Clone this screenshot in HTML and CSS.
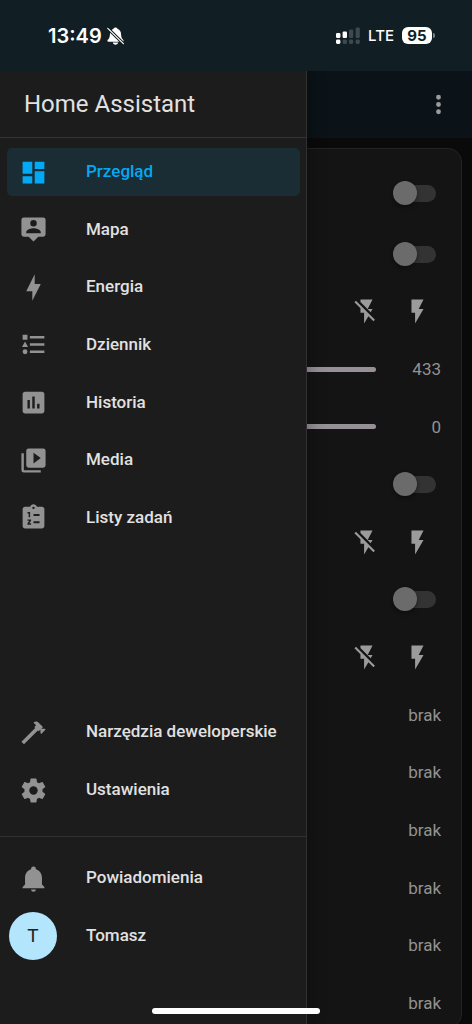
FILE: index.html
```
<!DOCTYPE html>
<html lang="pl">
<head>
<meta charset="utf-8">
<meta name="viewport" content="width=device-width, initial-scale=1">
<title>Home Assistant</title>
<link rel="stylesheet" href="styles.css">
</head>
<body>
<svg class="sprite" aria-hidden="true">
  <symbol id="flash" viewBox="0 0 24 24"><path d="M7,2V13H10V22L17,10H13L17,2H7Z"/></symbol>
  <symbol id="flash-off" viewBox="0 0 24 24"><path d="M17,10H13L17,2H7V4.18L15.46,12.64M3.27,3L2,4.27L7,9.27V13H10V22L13.58,15.86L17.73,20L19,18.73L3.27,3Z"/></symbol>
</svg>

<header class="status">
  <div class="status-left">
    <time class="clock">13:49</time>
    <svg class="mute" viewBox="0 0 17 18" aria-hidden="true">
      <path fill="#fff" d="M8.5 0.4C7.5 0.4 6.8 1 6.5 1.8C4 2.8 3 4.8 2.9 7.5C2.8 10.5 2 11.6 0.8 12.8C0 13.8 0.4 14.8 1.6 14.8H15.4C16.6 14.8 17 13.8 16.2 12.8C15 11.6 14.2 10.5 14.1 7.5C14 4.8 13 2.8 10.5 1.8C10.2 1 9.5 0.4 8.5 0.4ZM5.8 15.6H11.2C10.9 17 9.9 17.7 8.5 17.7S6.1 17 5.8 15.6Z"/>
      <path stroke="#111e23" stroke-width="3.2" d="M0.8 1.4L16.4 16.6"/>
      <path stroke="#fff" stroke-width="1.2" stroke-linecap="round" d="M0.8 1.4L16.4 16.6"/>
    </svg>
  </div>
  <div class="status-right">
    <svg class="signal" viewBox="0 0 24 18" aria-hidden="true">
      <g fill="#fff"><rect x="0" y="6" width="4.4" height="5" rx="1.2"/><rect x="6.6" y="4.5" width="4.4" height="6.5" rx="1.2"/><rect x="0" y="12.5" width="4.4" height="4.5" rx="1.4"/></g>
      <g fill="#3d494e"><rect x="13" y="2.5" width="4.2" height="8.5" rx="1.2"/><rect x="19.6" y="0.5" width="4.2" height="10.5" rx="1.2"/><rect x="6.6" y="12.5" width="4.4" height="4.5" rx="1.4"/><rect x="13" y="12.5" width="4.2" height="4.5" rx="1.4"/><rect x="19.6" y="12.5" width="4.2" height="4.5" rx="1.4"/></g>
    </svg>
    <span class="network">LTE</span>
    <span class="battery">95</span>
  </div>
</header>

<div class="app">
  <main class="view">
    <div class="toolbar">
      <button class="menu" type="button" aria-label="Menu">
        <svg class="icon" viewBox="0 0 24 24"><path d="M12,16A2,2 0 0,1 14,18A2,2 0 0,1 12,20A2,2 0 0,1 10,18A2,2 0 0,1 12,16M12,10A2,2 0 0,1 14,12A2,2 0 0,1 12,14A2,2 0 0,1 10,12A2,2 0 0,1 12,10M12,4A2,2 0 0,1 14,6A2,2 0 0,1 12,8A2,2 0 0,1 10,6A2,2 0 0,1 12,4Z"/></svg>
      </button>
    </div>
    <section class="card">
      <div class="row"><input class="toggle" type="checkbox" aria-label="Wszystkie"></div>
      <div class="rows">
        <div class="row"><input class="toggle" type="checkbox" aria-label="Przełącznik 1"></div>
        <div class="row"><button class="action" type="button" aria-label="Wyłącz"><svg class="icon"><use href="#flash-off"/></svg></button><button class="action" type="button" aria-label="Włącz"><svg class="icon"><use href="#flash"/></svg></button></div>
        <div class="row"><input class="slider" id="s1" type="range" min="0" max="9999" value="433" aria-label="Wartość 1"><output class="value" for="s1">433</output></div>
        <div class="row"><input class="slider" id="s2" type="range" min="0" max="9999" value="0" aria-label="Wartość 2"><output class="value" for="s2">0</output></div>
        <div class="row"><input class="toggle" type="checkbox" aria-label="Przełącznik 2"></div>
        <div class="row"><button class="action" type="button" aria-label="Wyłącz"><svg class="icon"><use href="#flash-off"/></svg></button><button class="action" type="button" aria-label="Włącz"><svg class="icon"><use href="#flash"/></svg></button></div>
        <div class="row"><input class="toggle" type="checkbox" aria-label="Przełącznik 3"></div>
        <div class="row"><button class="action" type="button" aria-label="Wyłącz"><svg class="icon"><use href="#flash-off"/></svg></button><button class="action" type="button" aria-label="Włącz"><svg class="icon"><use href="#flash"/></svg></button></div>
        <div class="row"><span class="value">brak</span></div>
        <div class="row"><span class="value">brak</span></div>
        <div class="row"><span class="value">brak</span></div>
        <div class="row"><span class="value">brak</span></div>
        <div class="row"><span class="value">brak</span></div>
        <div class="row"><span class="value">brak</span></div>
      </div>
    </section>
  </main>

  <aside class="drawer">
    <h1 class="title">Home Assistant</h1>
    <nav class="nav">
      <a class="item active" href="#przeglad"><svg class="icon" viewBox="0 0 24 24"><path d="M13,3V9H21V3M13,21H21V11H13M3,21H11V15H3M3,13H11V3H3V13Z"/></svg><span class="label">Przegląd</span></a>
      <a class="item" href="#mapa"><svg class="icon" viewBox="0 0 24 24"><path fill-rule="evenodd" d="M4,2H20A2,2 0 0,1 22,4V16A2,2 0 0,1 20,18H16L12,22L8,18H4A2,2 0 0,1 2,16V4A2,2 0 0,1 4,2ZM12,4.2A2.7,2.7 0 0,0 12,9.6A2.7,2.7 0 0,0 12,4.2ZM18,15V14.1C18,12.1 14,11 12,11S6,12.1 6,14.1V15H18Z"/></svg><span class="label">Mapa</span></a>
      <a class="item" href="#energia"><svg class="icon" viewBox="0 0 24 24"><path d="M11 15H6L13 1V9H18L11 23V15Z"/></svg><span class="label">Energia</span></a>
      <a class="item" href="#dziennik"><svg class="icon" viewBox="0 0 24 24"><path d="M5,9.5L7.5,14H2.5L5,9.5M3,4H7V8H3V4M5,20A2,2 0 0,0 7,18A2,2 0 0,0 5,16A2,2 0 0,0 3,18A2,2 0 0,0 5,20M9,5V7H21V5H9M9,19H21V17H9V19M9,11V13H21V11H9Z"/></svg><span class="label">Dziennik</span></a>
      <a class="item" href="#historia"><svg class="icon" viewBox="0 0 24 24"><path fill-rule="evenodd" d="M19 3H5C3.9 3 3 3.9 3 5V19C3 20.1 3.9 21 5 21H19C20.1 21 21 20.1 21 19V5C21 3.9 20.1 3 19 3M9 17H7V10H9V17M13 17H11V7H13V17M17 17H15V13H17V17Z"/></svg><span class="label">Historia</span></a>
      <a class="item" href="#media"><svg class="icon" viewBox="0 0 24 24"><path fill-rule="evenodd" d="M4,6H2V20A2,2 0 0,0 4,22H18V20H4V6M20,2H8A2,2 0 0,0 6,4V16A2,2 0 0,0 8,18H20A2,2 0 0,0 22,16V4A2,2 0 0,0 20,2M12,14.5V5.5L18,10L12,14.5Z"/></svg><span class="label">Media</span></a>
      <a class="item" href="#listy"><svg class="icon" viewBox="0 0 24 24"><path fill-rule="evenodd" d="M19 3H14.8C14.4 1.8 13.3 1 12 1S9.6 1.8 9.2 3H5C3.9 3 3 3.9 3 5V19C3 20.1 3.9 21 5 21H19C20.1 21 21 20.1 21 19V5C21 3.9 20.1 3 19 3M12 3A1 1 0 0 1 12 5A1 1 0 0 1 12 3M7 7.5H9.2V11.8H8V8.6H7ZM7 13.6H10V14.7L8.5 16.8H10V17.9H7V16.8L8.5 14.7H7ZM12 9H17V10.8H12ZM12 15H17V16.8H12Z"/></svg><span class="label">Listy zadań</span></a>
    </nav>
    <nav class="nav-tools">
      <a class="item" href="#narzedzia"><svg class="icon" viewBox="0 0 24 24"><path d="M2,19.63L13.43,8.2L12.72,7.5L14.14,6.07L12,3.89C13.2,2.7 15.09,2.7 16.27,3.89L19.87,7.5L18.45,8.91H21.29L22,9.62L18.45,13.21L17.74,12.5V9.62L16.27,11.04L15.56,10.33L4.13,21.76L2,19.63Z"/></svg><span class="label">Narzędzia deweloperskie</span></a>
      <a class="item" href="#ustawienia"><svg class="icon" viewBox="0 0 24 24"><path d="M12,15.5A3.5,3.5 0 0,1 8.5,12A3.5,3.5 0 0,1 12,8.5A3.5,3.5 0 0,1 15.5,12A3.5,3.5 0 0,1 12,15.5M19.43,12.97C19.47,12.65 19.5,12.33 19.5,12C19.5,11.67 19.47,11.34 19.43,11L21.54,9.37C21.73,9.22 21.78,8.95 21.66,8.73L19.66,5.27C19.54,5.05 19.27,4.96 19.05,5.05L16.56,6.05C16.04,5.66 15.5,5.32 14.87,5.07L14.5,2.42C14.46,2.18 14.25,2 14,2H10C9.75,2 9.54,2.18 9.5,2.42L9.13,5.07C8.5,5.32 7.96,5.66 7.44,6.05L4.95,5.05C4.73,4.96 4.46,5.05 4.34,5.27L2.34,8.73C2.21,8.95 2.27,9.22 2.46,9.37L4.57,11C4.53,11.34 4.5,11.67 4.5,12C4.5,12.33 4.53,12.65 4.57,12.97L2.46,14.63C2.27,14.78 2.21,15.05 2.34,15.27L4.34,18.73C4.46,18.95 4.73,19.03 4.95,18.95L7.44,17.94C7.96,18.34 8.5,18.68 9.13,18.93L9.5,21.58C9.54,21.82 9.75,22 10,22H14C14.25,22 14.46,21.82 14.5,21.58L14.87,18.93C15.5,18.67 16.04,18.34 16.56,17.94L19.05,18.95C19.27,19.03 19.54,18.95 19.66,18.73L21.66,15.27C21.78,15.05 21.73,14.78 21.54,14.63L19.43,12.97Z"/></svg><span class="label">Ustawienia</span></a>
    </nav>
    <div class="nav-user">
      <a class="item" href="#powiadomienia"><svg class="icon" viewBox="0 0 24 24"><path d="M21,19V20H3V19L5,17V11C5,7.9 7.03,5.17 10,4.29C10,4.19 10,4.1 10,4A2,2 0 0,1 12,2A2,2 0 0,1 14,4C14,4.1 14,4.19 14,4.29C16.97,5.17 19,7.9 19,11V17L21,19M14,21A2,2 0 0,1 12,23A2,2 0 0,1 10,21"/></svg><span class="label">Powiadomienia</span></a>
      <a class="item profile" href="#profil"><span class="avatar">T</span><span class="label">Tomasz</span></a>
    </div>
  </aside>
</div>
<div class="home-bar"></div>
</body>
</html>
```
FILE: styles.css
```
* { box-sizing: border-box; }

body {
  margin: 0;
  height: 100vh;
  display: flex;
  flex-direction: column;
  overflow: hidden;
  background: #0a0a0a;
  color: #e1e1e1;
  font-family: Roboto, "Noto Sans", sans-serif;
  font-size: 17px;
  line-height: 24px;
}

.sprite { display: none; }

.icon {
  display: block;
  flex: none;
  width: 29px;
  height: 29px;
  fill: currentColor;
}

/* Status bar */
.status {
  flex: none;
  height: 71px;
  padding: 0 40px 0 48px;
  display: flex;
  align-items: center;
  justify-content: space-between;
  background: #111e23;
  color: #fff;
  font-family: Inter, sans-serif;
}

.status-left, .status-right { display: flex; align-items: center; }
.status-left { gap: 5px; }
.status-right { gap: 8px; }
.clock { font-size: 20px; font-weight: 600; }
.mute { width: 17px; height: 18px; fill: none; }
.signal { width: 24px; height: 18px; }
.network { font-size: 15px; font-weight: 500; line-height: 18px; }

.battery {
  position: relative;
  width: 30px;
  border-radius: 6px;
  background: #fff;
  color: #111e23;
  font-size: 15px;
  font-weight: 700;
  line-height: 17px;
  text-align: center;
}

.battery::after {
  content: "";
  position: absolute;
  top: 6px;
  right: -3px;
  width: 2px;
  height: 5px;
  border-radius: 0 2px 2px 0;
  background: #7b8386;
}

/* Dashboard behind the drawer */
.app {
  position: relative;
  flex: 1;
  min-height: 0;
  overflow: hidden;
}

.view { height: 100%; overflow: hidden; }

.toolbar {
  height: 67px;
  padding: 0 10px;
  display: flex;
  align-items: center;
  justify-content: flex-end;
  background: #0b1318;
}

button {
  display: flex;
  align-items: center;
  justify-content: center;
  width: 48px;
  height: 48px;
  padding: 0;
  border: 0;
  background: none;
  color: #9b9b9b;
}

.card {
  margin: 10px 10px 0;
  padding: 20px 20px 0;
  border: 1px solid #242424;
  border-radius: 14px;
  background: #141414;
}

.rows {
  min-height: 797px;
  margin-top: 13px;
  display: flex;
  flex-direction: column;
  justify-content: space-between;
}

.row {
  height: 48px;
  padding-left: 170px;
  display: flex;
  align-items: center;
  justify-content: flex-end;
  gap: 3px;
}

.toggle {
  appearance: none;
  position: relative;
  width: 42px;
  height: 17px;
  margin: 0 5px 0 0;
  border-radius: 9px;
  background: #333;
}

.toggle::before {
  content: "";
  position: absolute;
  top: -4px;
  left: -1px;
  width: 24px;
  height: 24px;
  border-radius: 50%;
  background: #6b6b6b;
  box-shadow: 0 2px 4px rgba(0, 0, 0, .4);
}

.slider {
  appearance: none;
  flex: 1;
  min-width: 0;
  height: 5px;
  margin: 0;
  border-radius: 3px;
  background: #979197;
}

.slider::-webkit-slider-thumb {
  appearance: none;
  width: 14px;
  height: 14px;
  border-radius: 50%;
  background: #979197;
}

.value {
  min-width: 62px;
  color: #929292;
  text-align: right;
}

/* Drawer */
.drawer {
  position: absolute;
  top: 0;
  bottom: 0;
  left: 0;
  width: 307px;
  padding-bottom: 64px;
  display: flex;
  flex-direction: column;
  border-right: 1px solid #303030;
  background: #1c1c1c;
  box-shadow: 2px 0 16px rgba(0, 0, 0, .3);
}

.title {
  margin: 0;
  height: 67px;
  padding: 0 24px;
  border-bottom: 1px solid #333;
  font-size: 24px;
  font-weight: 400;
  line-height: 67px;
}

.nav, .nav-tools, .nav-user {
  display: flex;
  flex-direction: column;
  justify-content: space-between;
  padding: 0 6px 0 7px;
}

.nav { min-height: 394px; margin-top: 10px; }
.nav-tools { gap: 10px; margin-top: auto; padding-bottom: 22px; }

.nav-user {
  gap: 10px;
  padding-top: 17px;
  border-top: 1px solid #303030;
}

.item {
  height: 48px;
  padding: 0 12px;
  display: flex;
  align-items: center;
  gap: 38px;
  border-radius: 5px;
  color: #e1e1e1;
  font-weight: 500;
  text-decoration: none;
  white-space: nowrap;
}

.label { padding-bottom: 2px; }
.item .icon { color: #929292; }
.item.active { background: #1a2c34; color: #03a9f4; }
.item.active .icon { color: #03a9f4; }
.profile { padding-left: 2px; gap: 29px; }

.avatar {
  width: 48px;
  height: 48px;
  border-radius: 50%;
  background: #b3e5fc;
  color: #212121;
  font-size: 19px;
  font-weight: 400;
  line-height: 48px;
  text-align: center;
}

.home-bar {
  position: fixed;
  bottom: 10px;
  left: 50%;
  width: 168px;
  height: 6px;
  margin-left: -84px;
  border-radius: 3px;
  background: #fff;
}
```
